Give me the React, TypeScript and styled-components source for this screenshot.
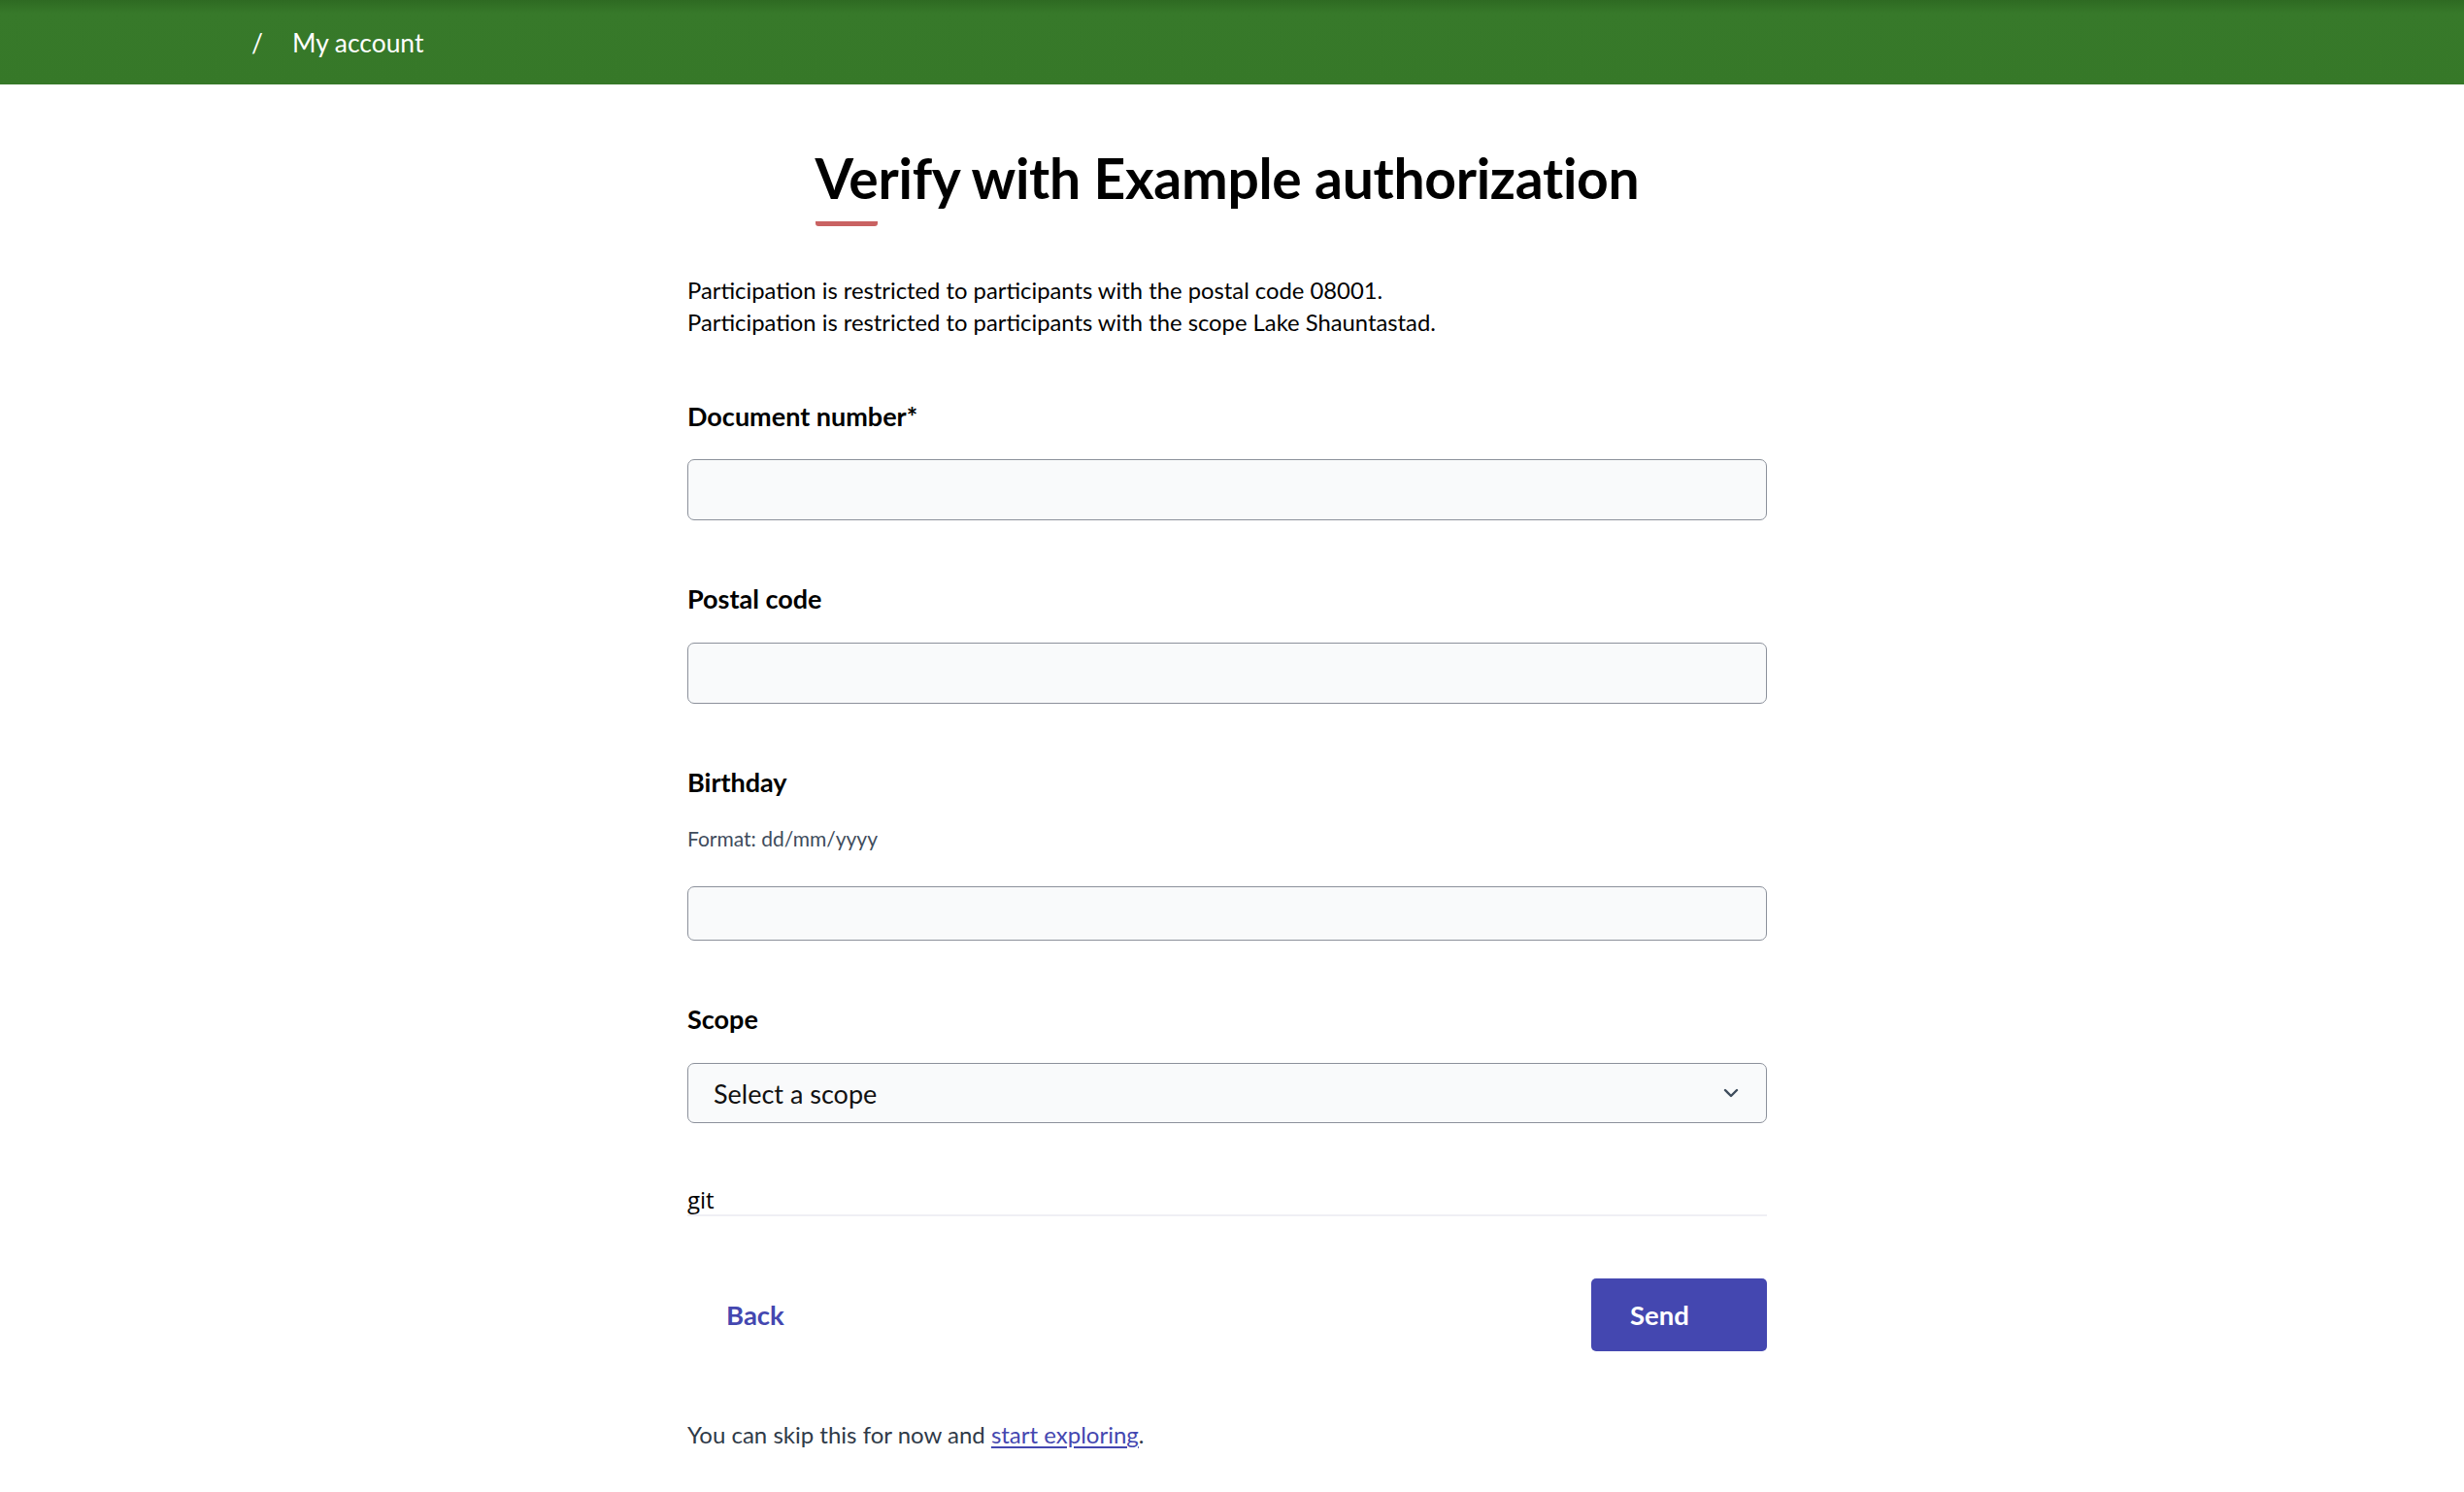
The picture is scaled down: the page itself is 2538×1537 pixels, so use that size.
import styled, { createGlobalStyle } from 'styled-components';

const GlobalStyle = createGlobalStyle`
  html, body {
    margin: 0;
    padding: 0;
    background: #ffffff;
  }
  body {
    font-family: Lato, 'Liberation Sans', sans-serif;
    color: #000000;
  }
  * {
    box-sizing: border-box;
  }
`;

const Header = styled.header`
  height: 87px;
  background: linear-gradient(#2e6a22 0px, #37792a 14px, #367828 100%);
  display: flex;
  align-items: center;
  padding-left: 259px;
  color: #ffffff;
  font-size: 26.4px;
`;

const Slash = styled.span`
  margin-right: 30px;
`;

const Main = styled.main`
  width: 1112px;
  margin: 0 auto;
  position: relative;
  left: -5px;
  padding-top: 62px;
  padding-bottom: 60px;
`;

const TitleWrap = styled.div`
  display: flex;
  justify-content: center;
`;

const Title = styled.h1`
  margin: 0;
  display: inline-flex;
  flex-direction: column;
  font-size: 57px;
  line-height: 1.2;
  font-weight: 700;
  letter-spacing: -0.3px;
  &::after {
    content: '';
    display: block;
    width: 64px;
    height: 5px;
    margin-top: 11px;
    background: #c96262;
    border-radius: 0 0 3px 3px;
  }
`;

const Notice = styled.p`
  margin: 50px 0 0;
  font-size: 23.8px;
  line-height: 32.4px;
`;

const Field = styled.div`
  margin-top: 65px;
  display: flex;
  flex-direction: column;
`;

const Label = styled.label`
  font-size: 27px;
  line-height: 32px;
  font-weight: 700;
`;

const Help = styled.span`
  margin-top: 28px;
  font-size: 21px;
  line-height: 27px;
  color: #3e4c5c;
`;

const Input = styled.input<{ $h: number; $gap: number }>`
  display: block;
  width: 100%;
  height: ${(p) => p.$h}px;
  margin-top: ${(p) => p.$gap}px;
  background: #f9fafb;
  border: 1px solid #8c919b;
  border-radius: 7px;
  font: inherit;
  font-size: 24px;
  padding: 0 24px;
  outline: none;
`;

const SelectBox = styled.div`
  margin-top: 29px;
  height: 62px;
  background: #f9fafb;
  border: 1px solid #8c919b;
  border-radius: 7px;
  display: flex;
  align-items: center;
  justify-content: space-between;
  padding: 0 28px 0 26px;
  font-size: 27px;
  color: #111111;
`;

const GitRow = styled.div`
  margin-top: 64px;
  font-family: 'Open Sans', 'Noto Sans', sans-serif;
  font-size: 24px;
  line-height: 30px;
  border-bottom: 2px solid #efeff4;
`;

const Actions = styled.div`
  margin-top: 64px;
  display: flex;
  justify-content: space-between;
  align-items: center;
`;

const Button = styled.button<{ $primary?: boolean }>`
  height: 75px;
  width: ${(p) => (p.$primary ? '181px' : 'auto')};
  padding: 0 40px;
  text-align: left;
  border: none;
  border-radius: 5px;
  font-family: inherit;
  font-size: 27.5px;
  font-weight: 700;
  cursor: pointer;
  background: ${(p) => (p.$primary ? '#4447b0' : 'transparent')};
  color: ${(p) => (p.$primary ? '#ffffff' : '#4447b0')};
`;

const Footer = styled.p`
  margin: 70px 0 0;
  font-size: 24px;
  line-height: 32px;
  color: #2f3a48;
  a {
    color: #4447b0;
    text-decoration: underline;
    text-underline-offset: 3px;
  }
`;

function App() {
  return (
    <>
      <GlobalStyle />
      <Header>
        <Slash>/</Slash>
        <span>My account</span>
      </Header>
      <Main>
        <TitleWrap>
          <Title>Verify with Example authorization</Title>
        </TitleWrap>
        <Notice>
          Participation is restricted to participants with the postal code 08001.
          <br />
          Participation is restricted to participants with the scope Lake Shauntastad.
        </Notice>

        <Field>
          <Label>Document number*</Label>
          <Input $h={63} $gap={28} type="text" />
        </Field>

        <Field>
          <Label>Postal code</Label>
          <Input $h={63} $gap={29} type="text" />
        </Field>

        <Field>
          <Label>Birthday</Label>
          <Help>Format: dd/mm/yyyy</Help>
          <Input $h={56} $gap={36} type="text" />
        </Field>

        <Field>
          <Label>Scope</Label>
          <SelectBox>
            <span>Select a scope</span>
            <svg width="16" height="10" viewBox="0 0 16 10" fill="none">
              <path d="M2 2l6 6 6-6" stroke="#3e4c5c" strokeWidth="2.4" strokeLinecap="round" strokeLinejoin="round" />
            </svg>
          </SelectBox>
        </Field>

        <GitRow>git</GitRow>

        <Actions>
          <Button>Back</Button>
          <Button $primary>Send</Button>
        </Actions>

        <Footer>
          You can skip this for now and <a href="#">start exploring</a>.
        </Footer>
      </Main>
    </>
  );
}

export default App;
